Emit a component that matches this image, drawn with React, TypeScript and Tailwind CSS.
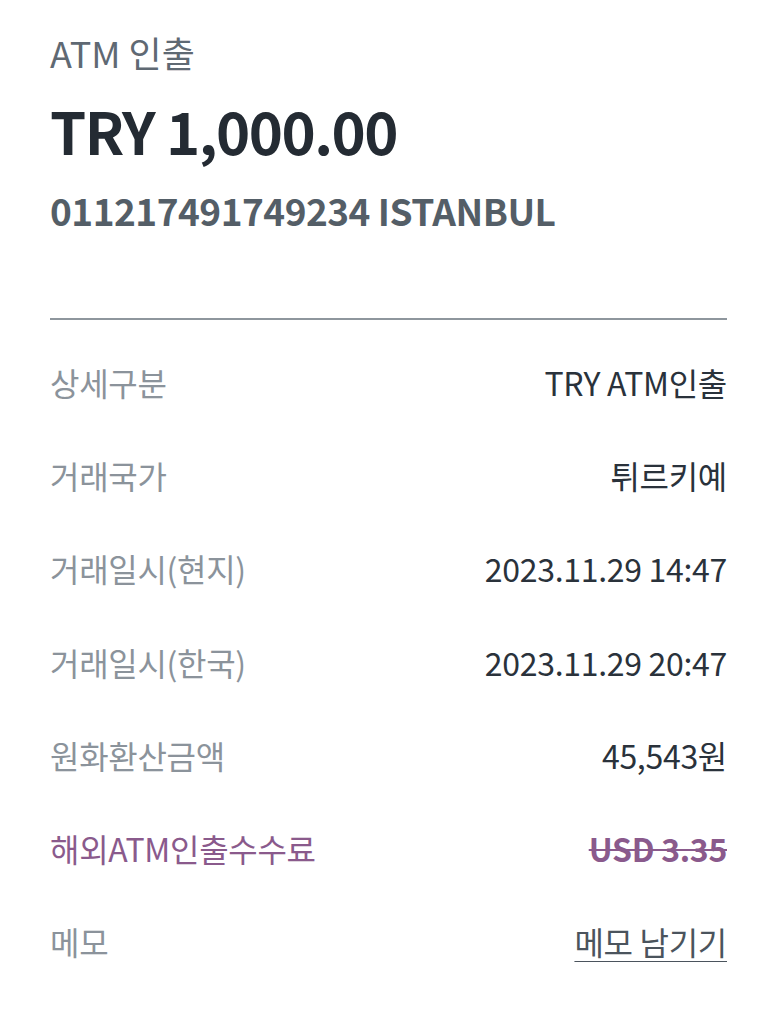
const rows: { label: string; value: string; kind?: 'fee' | 'memo' }[] = [
  { label: '상세구분', value: 'TRY ATM인출' },
  { label: '거래국가', value: '튀르키예' },
  { label: '거래일시(현지)', value: '2023.11.29 14:47' },
  { label: '거래일시(한국)', value: '2023.11.29 20:47' },
  { label: '원화환산금액', value: '45,543원' },
  { label: '해외ATM인출수수료', value: 'USD 3.35', kind: 'fee' },
  { label: '메모', value: '메모 남기기', kind: 'memo' },
]

export default function App() {
  return (
    <div
      className="min-h-[1024px] bg-white px-[50px] pt-[28px]"
      style={{ fontFamily: '"Noto Sans CJK KR", "Noto Sans", sans-serif' }}
    >
      {/* Header */}
      <div className="text-[36px] leading-[48px] text-[#5f6973]">ATM 인출</div>
      <div className="mt-[20px] text-[58px] font-bold leading-[68px] tracking-[-1.5px] text-[#242b33]">
        TRY 1,000.00
      </div>
      <div className="mt-[22px] text-[37px] font-semibold leading-[48px] tracking-[-0.5px] text-[#545e67]">
        011217491749234 ISTANBUL
      </div>

      <div className="mt-[84px] h-[2px] bg-[#8e969d]" />

      {/* Detail rows */}
      <div className="mt-[15px] flex flex-col">
        {rows.map((r) => (
          <div key={r.label} className="flex h-[93.3px] items-center justify-between text-[32px] tracking-[-0.3px]">
            <span className={r.kind === 'fee' ? 'text-[#8a5a8c]' : 'text-[#8b939b]'}>{r.label}</span>
            <span
              className={
                r.kind === 'fee'
                  ? 'font-semibold text-[#8a5a8c] line-through decoration-2'
                  : r.kind === 'memo'
                    ? 'text-[#4b545d] underline decoration-1 underline-offset-[6px]'
                    : 'text-[#2a323b]'
              }
            >
              {r.value}
            </span>
          </div>
        ))}
      </div>
    </div>
  )
}
